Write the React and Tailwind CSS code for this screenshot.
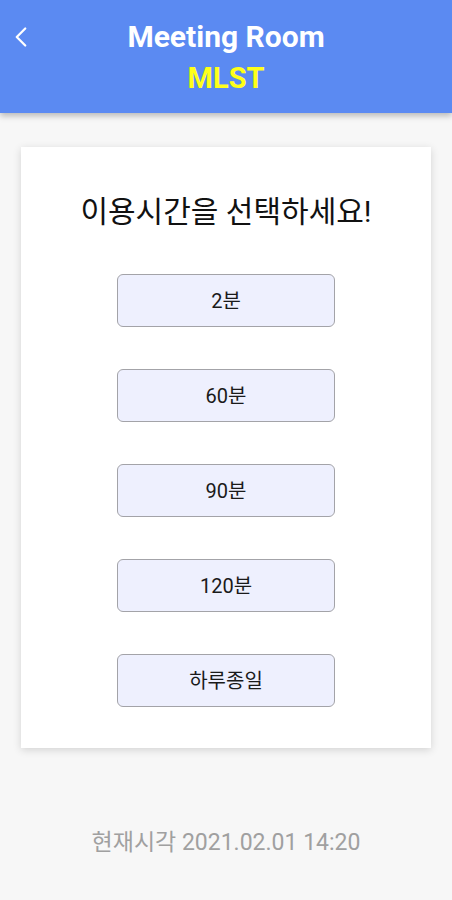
import { ChevronLeft } from "lucide-react";

const options = ["2분", "60분", "90분", "120분", "하루종일"];

export default function App() {
  return (
    <div
      className="min-h-[900px] w-full bg-[#f7f7f7] flex flex-col"
      style={{ fontFamily: "Roboto, 'Noto Sans CJK KR', sans-serif" }}
    >
      {/* Header */}
      <header className="relative h-[113px] bg-[#5b8af2] shadow-[0_3px_6px_rgba(0,0,0,0.25)] flex flex-col items-center pt-[17px]">
        <button className="absolute left-[4px] top-[20px] text-white">
          <ChevronLeft size={34} strokeWidth={1.6} />
        </button>
        <h1 className="text-white font-bold text-[30px] leading-[40px]">Meeting Room</h1>
        <h2 className="text-[#ffff1a] font-bold text-[29px] leading-[38px] mt-[2px]">MLST</h2>
      </header>

      {/* Card */}
      <div className="mx-[21px] mt-[34px] bg-white shadow-[0_2px_8px_rgba(0,0,0,0.15)] flex flex-col items-center pt-[45px] pb-[41px]">
        <p className="text-[30px] leading-[40px] text-[#111]">이용시간을 선택하세요!</p>
        <div className="flex flex-col gap-[42px] mt-[42px]">
          {options.map((o) => (
            <button
              key={o}
              className="w-[218px] h-[53px] rounded-[6px] border border-[#a3a3a8] bg-[#eef0fe] text-[20px] text-[#1a1a1a]"
            >
              {o}
            </button>
          ))}
        </div>
      </div>

      {/* Current time */}
      <p className="mt-[78px] text-center text-[23px] text-[#a0a0a0]">현재시각 2021.02.01 14:20</p>
    </div>
  );
}
